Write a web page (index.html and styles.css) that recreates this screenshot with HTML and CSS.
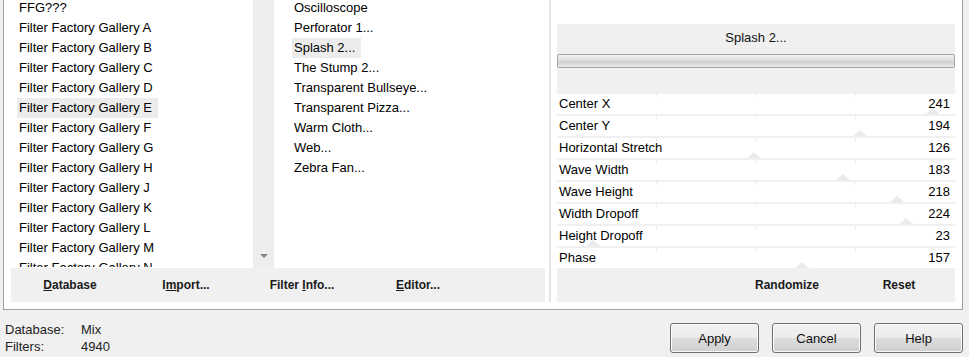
FILE: index.html
```html
<!DOCTYPE html>
<html>
<head>
<meta charset="utf-8">
<link rel="stylesheet" href="styles.css">
</head>
<body>
<div class="frame">
  <div class="left">
    <div class="lists">
      <div class="list list-cats">
        <div class="rows">
          <div class="item"><span>FFG???</span></div>
          <div class="item"><span>Filter Factory Gallery A</span></div>
          <div class="item"><span>Filter Factory Gallery B</span></div>
          <div class="item"><span>Filter Factory Gallery C</span></div>
          <div class="item"><span>Filter Factory Gallery D</span></div>
          <div class="item"><span class="sel">Filter Factory Gallery E</span></div>
          <div class="item"><span>Filter Factory Gallery F</span></div>
          <div class="item"><span>Filter Factory Gallery G</span></div>
          <div class="item"><span>Filter Factory Gallery H</span></div>
          <div class="item"><span>Filter Factory Gallery J</span></div>
          <div class="item"><span>Filter Factory Gallery K</span></div>
          <div class="item"><span>Filter Factory Gallery L</span></div>
          <div class="item"><span>Filter Factory Gallery M</span></div>
          <div class="item"><span>Filter Factory Gallery N</span></div>
        </div>
      </div>
      <div class="scrollbar"><span class="arrow"></span></div>
      <div class="list list-filters">
        <div class="rows">
          <div class="item"><span>Oscilloscope</span></div>
          <div class="item"><span>Perforator 1...</span></div>
          <div class="item"><span class="sel">Splash 2...</span></div>
          <div class="item"><span>The Stump 2...</span></div>
          <div class="item"><span>Transparent Bullseye...</span></div>
          <div class="item"><span>Transparent Pizza...</span></div>
          <div class="item"><span>Warm Cloth...</span></div>
          <div class="item"><span>Web...</span></div>
          <div class="item"><span>Zebra Fan...</span></div>
        </div>
      </div>
    </div>
    <div class="toolbar">
      <span class="tbtn"><u>D</u>atabase</span>
      <span class="tbtn">I<u>m</u>port...</span>
      <span class="tbtn">Filter <u>I</u>nfo...</span>
      <span class="tbtn"><u>E</u>ditor...</span>
    </div>
  </div>
  <div class="divider"></div>
  <div class="right">
    <div class="panel">
      <div class="panel-head">
        <div class="title">Splash 2...</div>
        <div class="progress"></div>
      </div>
      <div class="params">
        <div class="param"><span>Center X</span><span>241</span><i class="thumb" style="left:94.5%"></i></div>
        <div class="param"><span>Center Y</span><span>194</span><i class="thumb" style="left:76.1%"></i></div>
        <div class="param"><span>Horizontal Stretch</span><span>126</span><i class="thumb" style="left:49.4%"></i></div>
        <div class="param"><span>Wave Width</span><span>183</span><i class="thumb" style="left:71.8%"></i></div>
        <div class="param"><span>Wave Height</span><span>218</span><i class="thumb" style="left:85.5%"></i></div>
        <div class="param"><span>Width Dropoff</span><span>224</span><i class="thumb" style="left:87.8%"></i></div>
        <div class="param"><span>Height Dropoff</span><span>23</span><i class="thumb" style="left:9.0%"></i></div>
        <div class="param"><span>Phase</span><span>157</span><i class="thumb" style="left:61.6%"></i></div>
      </div>
      <div class="panel-foot">
        <span class="pbtn">Randomize</span>
        <span class="pbtn">Reset</span>
      </div>
    </div>
  </div>
</div>
<div class="footer">
  <div class="status">
    <div class="srow"><span class="slabel">Database:</span><span>Mix</span></div>
    <div class="srow"><span class="slabel">Filters:</span><span>4940</span></div>
  </div>
  <div class="buttons">
    <button class="btn">Apply</button>
    <button class="btn">Cancel</button>
    <button class="btn">Help</button>
  </div>
</div>
</body>
</html>
```
FILE: styles.css
```css
html, body {
  margin: 0;
  padding: 0;
}
body {
  background: #f0f0f0;
  font-family: "Liberation Sans", Arial, sans-serif;
  font-size: 13px;
  color: #000;
  width: 969px;
  height: 357px;
  overflow: hidden;
}
.frame {
  margin-left: 3px;
  width: 958px;
  height: 309px;
  background: #fff;
  border: 1px solid #a0a0a0;
  border-top: none;
  display: flex;
}
.left {
  width: 545px;
  display: flex;
  flex-direction: column;
}
.lists {
  height: 268px;
  display: flex;
}
.list {
  height: 267px;
  overflow: hidden;
}
.list-cats {
  width: 249px;
  padding-left: 13px;
  box-sizing: border-box;
}
.list-filters {
  width: 275px;
  padding-left: 18px;
  box-sizing: border-box;
}
.rows {
  margin-top: -2px;
}
.item {
  height: 20px;
  line-height: 20px;
  white-space: nowrap;
}
.item span {
  display: inline-block;
  padding: 0 6px 0 2px;
}
.item span.sel {
  background: #ececec;
}
.scrollbar {
  width: 21px;
  height: 268px;
  background: #eeeeee;
  display: flex;
  flex-direction: column;
  justify-content: flex-end;
  align-items: center;
  box-sizing: border-box;
  padding-bottom: 10px;
}
.arrow {
  width: 0;
  height: 0;
  border-left: 4px solid transparent;
  border-right: 4px solid transparent;
  border-top: 4px solid #8a8a8a;
}
.toolbar {
  margin: 0 0 0 7px;
  width: 534px;
  height: 34px;
  background: #f0f0f0;
  display: flex;
  align-items: center;
  padding-left: 1px;
  box-sizing: border-box;
}
.tbtn {
  width: 116px;
  text-align: center;
  font-weight: bold;
  font-size: 12px;
  color: #1a1a1a;
}
.tbtn u {
  text-decoration: underline;
}
.divider {
  width: 2px;
  height: 302px;
  background: #e6e6e6;
}
.right {
  flex: 1;
  padding: 24px 7px 0 6px;
}
.panel {
  width: 398px;
  background: #f0f0f0;
}
.panel-head {
  height: 70px;
  padding-top: 6px;
  box-sizing: border-box;
}
.title {
  height: 16px;
  line-height: 16px;
  text-align: center;
  color: #111;
}
.progress {
  margin-top: 8px;
  height: 14px;
  box-sizing: border-box;
  border: 1px solid #a3a3a3;
  border-radius: 2px;
  background: linear-gradient(#f4f4f4, #e2e2e2 35%, #d2d2d2 55%, #dcdcdc 80%, #ececec);
}
.params {
  display: flex;
  flex-direction: column;
  gap: 2px;
}
.param {
  position: relative;
  height: 20px;
  line-height: 20px;
  background-color: #fff;
  background-image: linear-gradient(#ececec, #ececec), linear-gradient(#ececec, #ececec), linear-gradient(#ececec, #ececec);
  background-size: 1px 3px;
  background-repeat: no-repeat;
  background-position: 25% 0, 50% 0, 75% 0;
  display: flex;
  justify-content: space-between;
  padding: 0 5px 0 2px;
}
.param span {
  position: relative;
  z-index: 1;
}
.thumb {
  position: absolute;
  bottom: 0;
  width: 0;
  height: 0;
  border-left: 7px solid transparent;
  border-right: 7px solid transparent;
  border-bottom: 6px solid #ebebeb;
  transform: translateX(-50%);
}
.panel-foot {
  height: 34px;
  display: flex;
  justify-content: flex-end;
  align-items: center;
}
.pbtn {
  width: 112px;
  text-align: center;
  font-weight: bold;
  font-size: 12px;
  color: #1a1a1a;
}
.footer {
  display: flex;
  align-items: flex-start;
}
.status {
  margin: 11px 0 0 5px;
  line-height: 17px;
  font-size: 13px;
  color: #222;
}
.srow {
  display: flex;
}
.slabel {
  width: 76px;
}
.buttons {
  margin: 13px 6px 0 auto;
  display: flex;
  gap: 13px;
}
.btn {
  width: 89px;
  height: 30px;
  font-family: "Liberation Sans", Arial, sans-serif;
  font-size: 13px;
  color: #111;
  border: 1px solid #707070;
  border-radius: 3px;
  background: linear-gradient(#f2f2f2, #ebebeb 48%, #dddddd 52%, #cfcfcf);
  box-shadow: inset 0 0 0 1px #fbfbfb;
  padding: 0;
}
```
